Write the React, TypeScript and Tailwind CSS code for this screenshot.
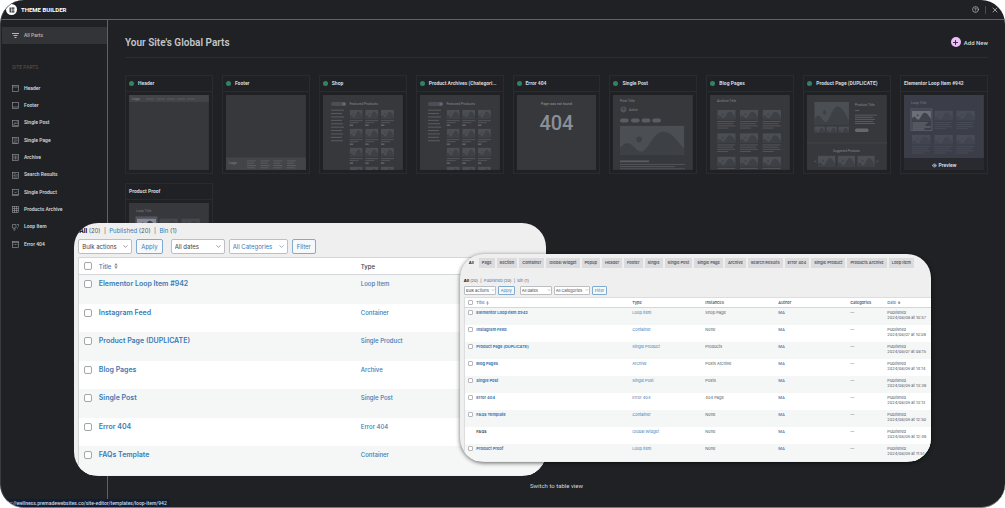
import type { ReactNode } from 'react'
import clsx from 'clsx'
import { ChevronDown, CircleHelp, Eye, Plus, X } from 'lucide-react'

interface Template {
  title: string
  type: string
  instances: string
  date: string
  locked?: boolean
}

const templates: Template[] = [
  { title: 'Elementor Loop Item #942', type: 'Loop Item', instances: 'Shop Page', date: '2024/08/08 at 10:57' },
  { title: 'Instagram Feed', type: 'Container', instances: 'None', date: '2024/08/07 at 10:09' },
  { title: 'Product Page (DUPLICATE)', type: 'Single Product', instances: 'Products', date: '2024/08/07 at 08:15' },
  { title: 'Blog Pages', type: 'Archive', instances: 'Posts Archive', date: '2024/08/06 at 14:14' },
  { title: 'Single Post', type: 'Single Post', instances: 'Posts', date: '2024/08/06 at 13:39' },
  { title: 'Error 404', type: 'Error 404', instances: '404 Page', date: '2024/08/06 at 13:13' },
  { title: 'FAQs Template', type: 'Container', instances: 'None', date: '2024/08/06 at 12:50' },
  { title: 'FAQs', type: 'Global Widget', instances: 'None', date: '2024/08/06 at 12:49', locked: true },
  { title: 'Product Proof', type: 'Loop Item', instances: 'None', date: '2024/08/06 at 11:51' },
]

const tabs = [
  'All', 'Page', 'Section', 'Container', 'Global Widget', 'Popup', 'Header', 'Footer', 'Single', 'Single Post',
  'Single Page', 'Archive', 'Search Results', 'Error 404', 'Single Product', 'Products Archive', 'Loop Item',
]

/* ---------- Thumbnails ---------- */

interface PictureProps {
  x: number
  y: number
  w: number
  h: number
  back?: string
  hill?: string
}

const Picture = ({ x, y, w, h, back = '#4b4e53', hill = '#3d4045' }: PictureProps) => (
  <svg x={x} y={y} width={w} height={h} viewBox="0 0 64 29" preserveAspectRatio="none">
    <rect width="64" height="29" fill={back} />
    <path d="M0 22C3 18 7 16 11 18.500C15 21 17 25.500 21 25.500C28 25.500 33 6 43 6C52 6 58 17 64 23V29H0Z" fill={hill} />
    <ellipse cx="19" cy="13.500" rx="2.800" ry="2.800" fill={hill} />
  </svg>
)

const Lines = ({ x, y, widths, step = 2.4, fill = '#515459' }: { x: number; y: number; widths: number[]; step?: number; fill?: string }) => (
  <>
    {widths.map((w, i) => (
      <rect key={i} x={x} y={y + i * step} width={w} height="1" fill={fill} />
    ))}
  </>
)

const Thumb = ({ children, label, bg = '#37383c' }: { children: ReactNode; label: string; bg?: string }) => (
  <svg viewBox="0 0 80 75" className="block w-full" role="img" aria-label={label} fontFamily="Roboto, sans-serif">
    <rect width="80" height="75" fill={bg} />
    {children}
  </svg>
)

const HeaderThumb = () => (
  <Thumb label="Header">
    <rect width="80" height="7" fill="#434448" />
    <text x="3" y="5" fontSize="3.500" fill="#85888d">Logo</text>
    {[17, 28, 38, 48, 58].map((x) => (
      <rect key={x} x={x} y="3.500" width="8" height="1" fill="#5a5c61" />
    ))}
  </Thumb>
)

const FooterThumb = () => (
  <Thumb label="Footer">
    <rect y="62.500" width="80" height="12.500" fill="#434448" />
    <text x="3" y="69" fontSize="3.500" fill="#85888d">Logo</text>
    {[21, 34.5, 47.5, 61].map((x) => (
      <Lines key={x} x={x} y={65.5} widths={[9, 7, 9, 8]} step={2.3} fill="#5a5c61" />
    ))}
  </Thumb>
)

const ShopThumb = () => (
  <Thumb label="Shop">
    <rect x="8" y="7" width="15" height="4" rx="2" fill="#4b4e53" />
    <circle cx="21" cy="9" r="1.800" fill="#65686d" />
    <text x="26.500" y="10.500" fontSize="3.500" fill="#85888d">Featured Products</text>
    <Lines x={8} y={14.700} widths={[13, 11, 13, 11, 12, 13, 11, 12, 11, 12]} step={3.4} fill="#5a5c61" />
    {[14.7, 33.7, 52.7, 71.700].map((y) => (
      <g key={y}>
        {[26.7, 42.3, 58].map((x) => (
          <g key={x}>
            <Picture x={x} y={y} w={13} h={9} />
            <Lines x={x} y={y + 10.5} widths={[13, 9]} step={2} />
            <rect x={x} y={y + 15} width="3.500" height="1" fill="#777a7f" />
          </g>
        ))}
      </g>
    ))}
  </Thumb>
)

const NotFoundThumb = () => (
  <Thumb label="Error 404">
    <text x="39.500" y="10" fontSize="3.500" textAnchor="middle" fill="#9a9da2">Page was not found</text>
    <text x="39.500" y="35.500" fontSize="20" fontWeight="500" textAnchor="middle" fill="#8b8f98">404</text>
  </Thumb>
)

const SinglePostThumb = () => (
  <Thumb label="Single Post">
    <text x="7" y="7.500" fontSize="3.500" fill="#85888d">Post Title</text>
    <circle cx="10.500" cy="14.500" r="3" fill="#515459" />
    <circle cx="10.500" cy="13.800" r="1.200" fill="#3d4045" />
    <text x="16" y="15.700" fontSize="3" fill="#85888d">Author</text>
    {[7, 18, 28.7, 39.3].map((x) => (
      <rect key={x} x={x} y="23.500" width="8.700" height="4" rx="2" fill="#5a5c61" />
    ))}
    <Picture x={7} y={30.7} w={64.5} h={29.5} />
    <rect x="7" y="65.500" width="29" height="1.800" fill="#5a5c61" />
    <Lines x={7} y={69} widths={[65, 55, 65]} step={2.2} />
  </Thumb>
)

const BlogThumb = () => (
  <Thumb label="Blog Pages">
    <text x="7" y="7.500" fontSize="3.500" fill="#85888d">Archive Title</text>
    {[14.7, 38.2, 61.7].map((y) => (
      <g key={y}>
        {[7.3, 30, 52.7].map((x) => (
          <g key={x}>
            <Picture x={x} y={y} w={18.4} h={9.8} />
            <Lines x={x} y={y + 11.3} widths={[18, 16, 18, 11]} step={2.2} />
          </g>
        ))}
      </g>
    ))}
  </Thumb>
)

const ProductThumb = () => (
  <Thumb label="Product Page">
    <Picture x={7.3} y={6.7} w={34.7} h={23.3} />
    {[7.3, 19.3, 31.3].map((x) => (
      <Picture key={x} x={x} y={31.3} w={10.7} h={6.7} />
    ))}
    <text x="48" y="10.700" fontSize="3.500" fill="#85888d">Product Title</text>
    <text x="48" y="16.500" fontSize="2.500" fill="#85888d">$00</text>
    <Lines x={48} y={19.7} widths={[22, 18, 20, 18, 20]} step={2.1} fill="#5a5c61" />
    <rect x="48" y="33.500" width="13.700" height="3.500" rx="1.700" fill="#65686d" />
    <rect y="47.500" width="80" height="1" fill="#424448" />
    <text x="39.500" y="57" fontSize="3" textAnchor="middle" fill="#85888d">Suggested Products</text>
    {[11, 30.7, 50.4].map((x) => (
      <Picture key={x} x={x} y={60.7} w={17.5} h={11.3} />
    ))}
    <path d="M9 65.500L8 66.500L9 67.500M70 65.500L71 66.500L70 67.500" fill="none" stroke="#85888d" strokeWidth=".5" />
  </Thumb>
)

const LoopThumb = ({ hovered }: { hovered?: boolean }) => {
  const back = hovered ? '#484c56' : '#46484d'
  const hill = hovered ? '#41454f' : '#3d4045'
  return (
    <Thumb label="Loop Item" bg={hovered ? '#3b3e48' : '#37383c'}>
      <text x="7" y="9.500" fontSize="3.500" fill="#777b85">Loop Title</text>
      {[15.5, 39.7, 63.9].map((y) => (
        <g key={y}>
          {[8, 30.3, 52.3].map((x) => (
            <g key={x}>
              <Picture x={x} y={y} w={18.7} h={10} back={back} hill={hill} />
              <Lines x={x} y={y + 11.5} widths={[18, 16, 18, 12]} step={2.1} fill={back} />
            </g>
          ))}
        </g>
      ))}
      <rect x="7" y="14" width="21" height="21.500" fill={hovered ? '#3b3e48' : '#4b4e53'} stroke="#5f636d" strokeWidth=".8" />
      <Picture x={8} y={15.5} w={19} h={10.5} back={hovered ? '#6b6f78' : '#858997'} hill={hovered ? '#3f434c' : '#3d4045'} />
      <Lines x={8.500} y={27.5} widths={[15, 13, 18, 12]} step={2} fill="#6f737c" />
    </Thumb>
  )
}

const parts = [
  { title: 'Header', active: true, thumb: <HeaderThumb /> },
  { title: 'Footer', active: true, thumb: <FooterThumb /> },
  { title: 'Shop', active: true, thumb: <ShopThumb /> },
  { title: 'Product Archives (Chategori...', active: true, thumb: <ShopThumb /> },
  { title: 'Error 404', active: true, thumb: <NotFoundThumb /> },
  { title: 'Single Post', active: true, thumb: <SinglePostThumb /> },
  { title: 'Blog Pages', active: true, thumb: <BlogThumb /> },
  { title: 'Product Page (DUPLICATE)', active: true, thumb: <ProductThumb /> },
  { title: 'Elementor Loop Item #942', active: false, thumb: <LoopThumb hovered />, preview: true },
  { title: 'Product Proof', active: false, thumb: <LoopThumb /> },
]

/* ---------- Sidebar ---------- */

const sideItems: { label: string; icon: ReactNode }[] = [
  { label: 'Header', icon: <path d="M1 4H13" /> },
  { label: 'Footer', icon: <path d="M1 10H13" /> },
  { label: 'Single Post', icon: <path d="M3 10L6 5L8 8M9 4H12M9 7H12M3 11H12" /> },
  { label: 'Single Page', icon: <path d="M3 4H11M3 11L6 7L8 9L11 6M3 12H11" /> },
  { label: 'Archive', icon: <path d="M4 3V11M7 3V11M10 3V11" /> },
  { label: 'Search Results', icon: <path d="M3 4H8M3 7H7M3 10H11M10 4V8" /> },
  { label: 'Single Product', icon: <path d="M1 11H13M4 5L7 8L10 5" /> },
  { label: 'Products Archive', icon: <path d="M1 5H13M1 9H13M5 1V13M9 1V13" /> },
  { label: 'Loop Item', icon: null },
  { label: 'Error 404', icon: <path d="M3 7H5M6 7H8M9 7H11M1 3H13" /> },
]

const Sidebar = () => (
  <aside className="mb-2 w-[107px] shrink-0 border-r border-[#606266] pt-[7px]">
    <a href="#all" className="ml-px flex h-[17px] items-center gap-[5px] bg-[#333438] pl-[10px] text-[5px] font-medium text-[#b4b7bc]">
      <svg viewBox="0 0 14 14" className="size-[7px]" fill="none" stroke="currentColor" strokeWidth="2">
        <path d="M0 3H14M3 7H11M5 11H9" />
      </svg>
      All Parts
    </a>
    <h2 className="mt-[19px] pl-[11px] text-[5px] leading-[8px] text-[#53565b]">SITE PARTS</h2>
    <nav className="mt-[9px] grid h-[173px] auto-rows-fr">
      {sideItems.map((item) => (
        <a key={item.label} href="#part" className="flex items-center gap-[5px] pl-[11px] text-[5px] font-semibold text-[#d0d3d7]">
          <svg viewBox="0 0 14 14" className="size-[7px] text-[#9a9da2]" fill="none" stroke="currentColor" strokeWidth="1.200">
            {item.icon ? <rect x="1" y="1" width="12" height="12" /> : <path d="M1 1H8V8H1ZM4 8V13L7 11M10 1H13V5M10 8H12" />}
            {item.icon}
          </svg>
          {item.label}
        </a>
      ))}
    </nav>
  </aside>
)

/* ---------- Template list ---------- */

const Check = ({ label, small }: { label: string; small?: boolean }) => (
  <input
    type="checkbox"
    aria-label={label}
    className={clsx('block appearance-none border bg-white', small ? 'size-[5px] rounded-[1px] border-[#b5b7ba]' : 'size-2 rounded-[2px] border-[#a2a5a9]')}
  />
)

interface DropProps {
  label: string
  small?: boolean
  blue?: boolean
  className: string
}

const Drop = ({ label, small, blue, className }: DropProps) => (
  <div className={clsx('relative', className)}>
    <select
      aria-label={label}
      className={clsx(
        'block w-full appearance-none border bg-white',
        small ? 'h-[9px] rounded-[1px] pl-px text-[4px] leading-[7px]' : 'h-[15px] rounded-[2px] pl-[3px] text-[6px] leading-[13px]',
        blue ? 'border-[#a9c5dd] text-[#3a7ab5]' : 'border-[#bcbec1] text-[#3c434a]'
      )}
    >
      <option>{label}</option>
    </select>
    <ChevronDown
      className={clsx('pointer-events-none absolute', small ? 'right-[1px] top-[2px] size-1' : 'right-[3px] top-1 size-[7px]', blue ? 'text-[#3a7ab5]' : 'text-[#50575e]')}
    />
  </div>
)

const ActionButton = ({ children, small }: { children: ReactNode; small?: boolean }) => (
  <button
    className={clsx(
      'border border-[#7fabd0] bg-[#f6f8fa] text-[#3a7ab5]',
      small ? 'h-[9px] rounded-[1px] px-[2px] text-[4px] leading-[7px]' : 'h-[15px] rounded-[2px] px-1 text-[6px] leading-[13px]'
    )}
  >
    {children}
  </button>
)

const StatusLinks = () => (
  <>
    <b className="text-black">All</b> (20) &nbsp;|&nbsp; <a href="#published" className="text-[#3a7ab5]">Published</a> (20) &nbsp;|&nbsp;{' '}
    <a href="#bin" className="text-[#3a7ab5]">Bin</a> (1)
  </>
)

const SortIcon = ({ className }: { className: string }) => (
  <svg viewBox="0 0 8 12" className={className} fill="#8c8f94">
    <path d="M4 0L7.500 5H.5ZM4 12L.5 7H7.500Z" />
  </svg>
)

const ZoomedPanel = () => (
  <section className="absolute left-[7.3%] top-[223px] h-[253px] w-[47%] overflow-hidden rounded-[24px] bg-[#efefef] pl-1 text-[#50575e]">
    <p className="pl-px pt-[3px] text-[6px] leading-[10px]">
      <StatusLinks />
    </p>
    <div className="mt-[3px] flex">
      <Drop label="Bulk actions" className="w-[54px]" />
      <div className="ml-1 mr-2 flex">
        <ActionButton>Apply</ActionButton>
      </div>
      <Drop label="All dates" className="w-[54px]" />
      <Drop label="All Categories" blue className="mx-1 w-[59px]" />
      <ActionButton>Filter</ActionButton>
    </div>
    <table className="mt-[3px] w-full table-fixed border-l border-t border-[#d5d6d8] bg-white text-left text-[6px] leading-[9px]">
      <colgroup>
        <col className="w-5" />
        <col className="w-[262px]" />
        <col />
      </colgroup>
      <thead>
        <tr className="h-[17px] border-b border-[#d5d6d8]">
          <th className="pl-[5px]"><Check label="Select all" /></th>
          <th className="font-medium">
            <a href="#title" className="flex items-center gap-[3px] text-[#3a7ab5]">Title <SortIcon className="h-[6px] w-1" /></a>
          </th>
          <th className="font-medium text-[#3c434a]">Type</th>
        </tr>
      </thead>
      <tbody>
        {templates.slice(0, 7).map((t) => (
          <tr key={t.title} className="align-top odd:h-[29px] odd:bg-[#f5f6f6] even:h-[28px]">
            <td className="pl-[5px] pt-[5px]"><Check label={t.title} /></td>
            <td className="pt-1 text-[7px]"><a href="#edit" className="font-semibold text-[#3a7ab5]">{t.title}</a></td>
            <td className="pt-1"><a href="#type" className="font-medium text-[#3a7ab5]">{t.type}</a></td>
          </tr>
        ))}
      </tbody>
    </table>
  </section>
)

const FullPanel = () => (
  <section className="absolute right-[7.4%] top-[254px] h-[208px] w-[46.9%] overflow-hidden rounded-[24px] bg-[#efefef] pl-1 text-[#50575e] shadow-[0_1px_4px_rgba(0,0,0,0.6)]">
    <nav className="mt-1 flex gap-[2px] whitespace-nowrap text-[4px] font-semibold leading-[10px]">
      {tabs.map((tab, i) => (
        <a key={tab} href="#tab" className={clsx('px-[3px]', i === 0 ? 'pl-[5px] text-black' : 'bg-[#dcdcde]')}>
          {tab}
        </a>
      ))}
    </nav>
    <p className="mt-[10px] text-[4px] leading-[6px]">
      <StatusLinks />
    </p>
    <div className="mt-[2px] flex">
      <Drop label="Bulk actions" small className="w-8" />
      <div className="ml-[2px] mr-[5px] flex">
        <ActionButton small>Apply</ActionButton>
      </div>
      <Drop label="All dates" small className="w-8" />
      <Drop label="All Categories" small className="mx-[2px] w-9" />
      <ActionButton small>Filter</ActionButton>
    </div>
    <table className="mt-[2px] w-full table-fixed border-l border-t border-[#dcdddf] bg-white text-left text-[4px] leading-[5px]">
      <colgroup>
        <col className="w-3" />
        <col className="w-[156px]" />
        <col className="w-[73px]" />
        <col className="w-[73px]" />
        <col className="w-[72px]" />
        <col className="w-[37px]" />
        <col />
      </colgroup>
      <thead>
        <tr className="h-[10px] border-b border-[#d5d6d8] text-[#3c434a] *:font-medium">
          <th className="pl-[3px]"><Check label="Select all templates" small /></th>
          <th><a href="#title" className="flex items-center gap-[1px] text-[#3a7ab5]">Title <SortIcon className="h-1 w-[3px]" /></a></th>
          <th>Type</th>
          <th>Instances</th>
          <th>Author</th>
          <th>Categories</th>
          <th><a href="#date" className="text-[#3a7ab5]">Date</a> <b>↓</b></th>
        </tr>
      </thead>
      <tbody>
        {templates.map((t) => (
          <tr key={t.title} className="h-[17px] align-top odd:bg-[#f5f6f6] *:pt-[2px]">
            <td className="pl-[3px]">{!t.locked && <Check label={`Select ${t.title}`} small />}</td>
            <td className="font-bold">{t.locked ? t.title : <a href="#edit" className="text-[#3a7ab5]">{t.title}</a>}</td>
            <td><a href="#type" className="text-[#3a7ab5]">{t.type}</a></td>
            <td>{t.instances}</td>
            <td><a href="#author" className="font-medium text-[#3a7ab5]">MA</a></td>
            <td>—</td>
            <td className="whitespace-nowrap">Published<br />{t.date}</td>
          </tr>
        ))}
      </tbody>
    </table>
  </section>
)

/* ---------- Page ---------- */

const App = () => (
  <div className="bg-white font-['Roboto',sans-serif]">
    <div className="relative flex min-h-screen flex-col overflow-hidden rounded-[24px] border-b border-l border-b-[#77797c] border-l-[#3a3c40] bg-[#1f2124] text-[#d5d8dc]">
      <header className="flex h-5 items-center border-b border-[#606266] pl-[5px] pr-[6px]">
        <span className="mr-1 flex size-[11px] items-center justify-center rounded-full bg-white">
          <svg viewBox="0 0 10 10" className="size-[6px]" fill="#1f2124">
            <path d="M1 1H3V9H1ZM4 1H9V3H4ZM4 4H9V6H4ZM4 7H9V9H4Z" />
          </svg>
        </span>
        <h1 className="text-[6px] font-bold text-white">THEME BUILDER</h1>
        <button aria-label="Help" className="ml-auto"><CircleHelp className="size-[7px]" /></button>
        <span className="ml-[6px] h-2 w-px bg-[#4a4c50]" />
        <button aria-label="Close" className="ml-[5px]"><X className="size-2" /></button>
      </header>

      <div className="flex flex-1">
        <Sidebar />
        <main className="flex min-w-0 flex-1 flex-col px-[17px]">
          <div className="flex h-[38px] items-center justify-between border-b border-[#2b2d31] pt-[7px]">
            <h2 className="text-[10px] font-semibold text-[#c3c6ca]">Your Site&apos;s Global Parts</h2>
            <button className="flex items-center gap-[3px] text-[6px] font-medium">
              <span className="flex size-[10px] items-center justify-center rounded-full bg-[#efbdf8] text-[#1f2124]">
                <Plus className="size-[7px]" strokeWidth={3} />
              </span>
              Add New
            </button>
          </div>

          <div className="mt-[17px] grid grid-cols-9 gap-[9px]">
            {parts.map((part) => (
              <article key={part.title} className="min-w-0 border border-[#292b2f]">
                <h3 className="flex h-4 items-center gap-1 whitespace-nowrap border-b border-[#292b2f] px-[3px] text-[5px] font-bold">
                  {part.active && <span className="size-[5px] shrink-0 rounded-full bg-[#2f8562]" />}
                  {part.title}
                </h3>
                <div className="relative p-[3px]">
                  {part.thumb}
                  {part.preview && (
                    <button className="absolute inset-x-[3px] bottom-[3px] flex h-3 items-center justify-center gap-[2px] bg-[#292a2f] pt-[3px] text-[5px] font-bold">
                      <Eye className="size-[5px]" strokeWidth={3} /> Preview
                    </button>
                  )}
                </div>
              </article>
            ))}
          </div>

          <button className="mb-4 mt-auto self-center text-[6px] leading-[10px]">Switch to table view</button>
        </main>
      </div>

      <div className="absolute bottom-0 left-0 h-2 bg-[#0f1e38] pl-2 pr-[3px] text-[5px] font-medium leading-[8px]">
        s://wellness.premadewebsites.co/site-editor/templates/loop-item/942
      </div>

      <div className="font-['Inter',sans-serif]">
        <ZoomedPanel />
        <FullPanel />
      </div>
    </div>
  </div>
)

export default App
